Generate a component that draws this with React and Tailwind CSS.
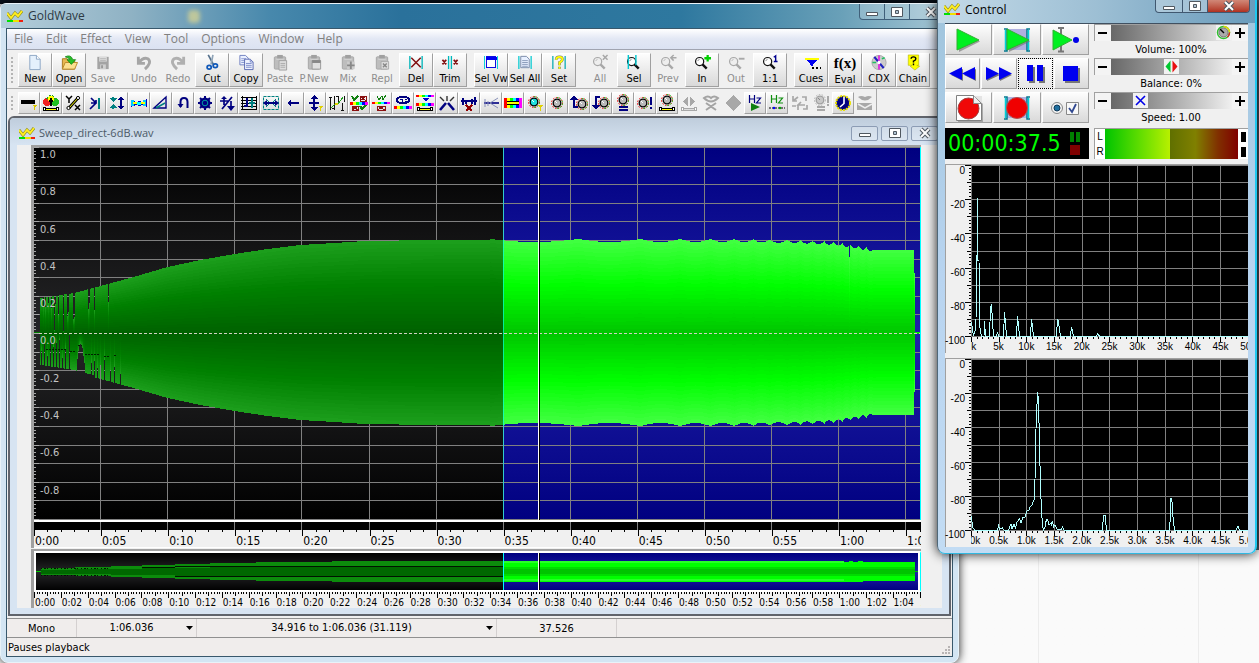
import { useState } from 'react'

const DURATION = 66.036
const WAVE_W = 887
const WAVE_H = 373
const SEL_START = 469
const CURSOR = 504
const pct = secs => `${(secs / DURATION) * 100}%`

const raised = 'border border-t-white border-l-white border-r-[#a0a0a0] border-b-[#a0a0a0] bg-linear-to-b from-[#fdfdfd] to-[#d9d9d9]'

/* ---------- small drawings ---------- */

const Pix = ({ w = 18, h = 18, children }) => (
  <svg width={w} height={h} viewBox={`0 0 ${w} ${h}`} fill="none" shapeRendering="crispEdges" aria-hidden="true">{children}</svg>
)

const Smooth = ({ w = 18, h = 18, children }) => (
  <svg width={w} height={h} viewBox={`0 0 ${w} ${h}`} fill="none" aria-hidden="true">{children}</svg>
)

const Logo = () => (
  <Smooth w={16} h={13}>
    <path d="M0 3 4 8 8 3 11 6 15 1" stroke="#8a8a20" strokeWidth="3" />
    <path d="M0 3 4 8 8 3 11 6 15 1" stroke="#ffee20" strokeWidth="2" />
    <path d="M0 10h6v2H0z" fill="#00e000" />
    <path d="M6 10h6v2H6z" fill="#f0e000" />
    <path d="M12 10h4v2h-4z" fill="#f02010" />
  </Smooth>
)

const Rainbow = ({ y = 9, h = 3 }) => (
  <>
    {['#f00', '#ff0', '#0f0', '#0ff', '#00f', '#f0f'].map((c, i) => (
      <rect key={c} x={i * 3} y={y} width="3" height={h} fill={c} />
    ))}
  </>
)

const YellowLine = ({ y = 15, c = '#000', f = '#ff0' }) => (
  <>
    <path d={`M3 ${y}h12`} stroke={c} strokeWidth="3" />
    <path d={`M3 ${y}h12`} stroke={f} strokeWidth="1" />
    <circle cx="2.5" cy={y} r="1.5" stroke={c} fill="#fff" />
    <circle cx="15.5" cy={y} r="1.5" stroke={c} fill="#fff" />
  </>
)

const Knob = ({ x = 9, y = 9, face = '#b8b8b8', grey }) => (
  <g shapeRendering="auto">
    <circle cx={x} cy={y} r="5.5" stroke={grey ? '#b0b0b0' : '#f00000'} strokeDasharray="1.5 1.5" />
    {!grey && <path d={`M${x} ${y - 5.5}a5.5 5.5 0 0 1 0 11`} stroke="#00c000" strokeDasharray="1.5 1.5" />}
    <circle cx={x} cy={y} r="3.8" fill={face} stroke={grey ? '#a0a0a0' : '#000'} strokeWidth="1.3" />
    <path d={`M${x - 2} ${y - 2}l2 2`} stroke={grey ? '#888' : '#fff'} />
  </g>
)

const Lens = ({ grey, children }) => (
  <Smooth w={24}>
    <circle cx="9.5" cy="8" r="4.3" fill={grey ? '#eee' : '#fff'} stroke={grey ? '#a8a8a8' : '#111'} strokeWidth="1.3" />
    <path d="M12.5 11 17 15.5" stroke={grey ? '#a8a8a8' : '#111'} strokeWidth="2.6" />
    <path d="M7.5 7.5q.4-1.6 2-2" stroke={grey ? '#bbb' : '#888'} />
    {children}
  </Smooth>
)

const Clip = ({ children }) => (
  <Smooth>
    <rect x="3" y="3" width="12" height="13" rx="1" fill="#bdbdbd" stroke="#a6a6a6" />
    <path d="M6 1h6v4H6z" fill="#a0a0a0" />
    <path d="M5 5.5h8" stroke="#d8d8d8" />
    {children}
  </Smooth>
)

/* ---------- main tool bar ---------- */

const mainIcons = {
  New: (
    <Smooth>
      <path d="M3.500 1.500h7l4 4v11h-11z" fill="#e4f0fc" stroke="#8ba6c4" />
      <path d="M10.500 1.500v4h4" fill="#fff" stroke="#8ba6c4" />
    </Smooth>
  ),
  Open: (
    <Smooth>
      <path d="M2 16V5h5l1 2h7v9z" fill="#e8b850" stroke="#a87820" />
      <path d="M2 16 5 9h13l-3 7z" fill="#fce090" stroke="#b88828" />
      <path d="M5 3q6-3 8 3h3l-4.500 5L7 6h3q-1-2-5-3z" fill="#28c028" stroke="#108010" strokeWidth=".8" />
    </Smooth>
  ),
  Save: (
    <Smooth>
      <path d="M3 3h12v13H3z" fill="#a4a4a4" />
      <path d="M5 3h8v5H5z" fill="#dcdcdc" />
      <path d="M6 5h6M6 7h6" stroke="#b4b4b4" />
      <path d="M6 11h6v5H6z" fill="#d0d0d0" />
      <path d="M7 12h2v3H7z" fill="#999" />
    </Smooth>
  ),
  Undo: (
    <Smooth><path d="M3 3v7h7M3.500 9.500Q8 3 13 5q5 4-3 11" stroke="#a6a6a6" strokeWidth="3" /></Smooth>
  ),
  Redo: (
    <Smooth><path d="M15 3v7H8M14.500 9.500Q10 3 5 5q-5 4 3 11" stroke="#b0b0b0" strokeWidth="3" /></Smooth>
  ),
  Cut: (
    <Smooth>
      <path d="M5 1 11 12" stroke="#56718c" strokeWidth="1.800" />
      <path d="M10 1 8 11" stroke="#8fa4b8" strokeWidth="1.800" />
      <ellipse cx="6" cy="14" rx="2.200" ry="2" stroke="#1058b8" strokeWidth="1.800" />
      <ellipse cx="12.500" cy="12.500" rx="2.300" ry="2" stroke="#1058b8" strokeWidth="1.800" />
    </Smooth>
  ),
  Copy: (
    <Smooth>
      <path d="M2.500 1.500h6l3 3v7h-9z" fill="#eaf0ff" stroke="#7080c0" />
      <path d="M4 5h5M4 7h5M4 9h5" stroke="#8898d0" />
      <path d="M7.500 5.500h6l3 3v8h-9z" fill="#eef2ff" stroke="#5868b0" />
      <path d="M13.500 5.500v3h3M9 10h6M9 12h6M9 14h6" stroke="#7888c8" />
    </Smooth>
  ),
  Paste: <Clip><path d="M8 7h8v10H8z" fill="#ddd" stroke="#a0a0a0" /><path d="M9.500 10h5M9.500 12h5M9.500 14h5" stroke="#aaa" /></Clip>,
  'P.New': <Clip><path d="M7 7h9v9H7z" fill="#e0e0e0" stroke="#999" /><path d="M7 8h9" stroke="#888" strokeWidth="3" /></Clip>,
  Mix: <Clip><path d="M8 8h8v8H8z" fill="#ccc" /><path d="M12 8v8M8 12h8" stroke="#888" strokeWidth="2" /></Clip>,
  Repl: <Clip><path d="M8 8h8v8H8z" fill="#ddd" stroke="#aaa" /><path d="m10 10 4 4m0-4-4 4" stroke="#888" strokeWidth="1.500" /></Clip>,
  Del: (
    <Smooth>
      <path d="M2.500 2v14M15.500 2v14" stroke="#00b4b8" strokeWidth="1.400" />
      <path d="m4 4 10 10M14 4 4 14" stroke="#801010" strokeWidth="1.600" />
    </Smooth>
  ),
  Trim: (
    <Smooth>
      <path d="M7.500 2v14M10.500 2v14" stroke="#00b8bc" strokeWidth="1.400" />
      <path d="m1 6 4 5m0-5-4 5m12-5 4 5m0-5-4 5" stroke="#801010" strokeWidth="1.800" />
    </Smooth>
  ),
  'Sel Vw': (
    <Pix>
      <path d="M2.500 2v14M15.500 2v14" stroke="#00d0d8" />
      <path d="M4 3h10v11H4z" fill="#fff" stroke="#0000e0" strokeWidth="1" />
      <path d="M4 3h11v3H4z" fill="#0000f0" />
    </Pix>
  ),
  'Sel All': (
    <Smooth>
      <path d="M2.500 2v14M15.500 2v14" stroke="#00c8d0" strokeWidth="1.300" />
      <path d="M4.500 2.500h6l3 3v9h-9z" fill="#e8f0ff" stroke="#7888a8" />
      <path d="M6 7h6M6 9h6M6 11h6M6 13h6" stroke="#8898b8" />
    </Smooth>
  ),
  Set: (
    <Smooth>
      <path d="M2.500 2v14M15.500 2v14" stroke="#00a8b0" strokeWidth="1.300" />
      <path d="M6 6q0-3 3.500-3t3 3.200Q12 8 9.500 9v3m0 1.500v2" stroke="#777" strokeWidth="3" />
      <path d="M6 6q0-3 3.500-3t3 3.200Q12 8 9.500 9v3m0 1.500v2" stroke="#ff0" strokeWidth="2" />
    </Smooth>
  ),
  All: <Lens grey><path d="m15 1 5 5m0-5-5 5" stroke="#a8a8a8" strokeWidth="1.600" /></Lens>,
  Sel: <Lens><path d="M6 1v15M14 1v11" stroke="#00c8d0" strokeWidth="1.500" /></Lens>,
  Prev: <Lens grey><path d="M21 4h-6m3-3-3 3 3 3" stroke="#a8a8a8" strokeWidth="1.600" /></Lens>,
  In: <Lens><path d="M18 1v7M14.500 4.500h7" stroke="#00d000" strokeWidth="2.400" /></Lens>,
  Out: <Lens grey><path d="M15 5h6" stroke="#a8a8a8" strokeWidth="2" /></Lens>,
  '1:1': <Lens><path d="M16 3.500 18 2v6m-2 0h4" stroke="#000090" strokeWidth="1.500" /></Lens>,
  Cues: (
    <Pix w={20}>
      <path d="M4 5h14l-7 8z" fill="#0000f0" />
      <path d="M4 5h14" stroke="#ff0" strokeWidth="2" />
      <path d="M11 14h2v2h-2zm4 0h2v2h-2zm4 0h2v2h-2z" fill="#000" />
    </Pix>
  ),
  Eval: <span className="h-[18px] font-['Liberation_Serif',serif] text-[15px] leading-[18px] font-bold">f(x)</span>,
  CDX: (
    <Smooth>
      <circle cx="9" cy="9" r="7.500" fill="#ccc" stroke="#a8a8a8" />
      <path d="m9 9-5-6M9 9l5 6" stroke="#2020c0" strokeWidth="2.200" />
      <path d="M9 1.500v15" stroke="#e020e0" strokeWidth="1.800" />
      <path d="M2 9h4m6-4 3-1" stroke="#20c060" strokeWidth="1.800" />
      <circle cx="9" cy="9" r="1.800" fill="#fff" />
    </Smooth>
  ),
  Chain: (
    <Smooth>
      <path d="M4 1h11v11h-2l3 1-5 4-5-4 2-1H4z" fill="#ff0" stroke="#b0b000" strokeWidth=".6" />
      <path d="M7 5q0-2 2.500-2T12 5q0 1.500-2.500 2.500V9m0 1v2" stroke="#000" strokeWidth="1.500" />
    </Smooth>
  ),
}

const mainGroups = [
  ['New', 'Open', 'Save'],
  ['Undo', 'Redo', 'Cut', 'Copy', 'Paste', 'P.New', 'Mix', 'Repl', 'Del', 'Trim'],
  ['Sel Vw', 'Sel All', 'Set'],
  ['All', 'Sel', 'Prev', 'In', 'Out', '1:1'],
  ['Cues', 'Eval', 'CDX', 'Chain'],
]
const disabledTools = ['Save', 'Undo', 'Redo', 'Paste', 'P.New', 'Mix', 'Repl', 'All', 'Prev', 'Out']

const Grip = () => <div className="mx-1 my-1 w-[3px] border-l-2 border-dotted border-[#b4b4b4]" />

const MainToolbar = () => (
  <div className="flex gap-[7px] border-b border-[#b0b0b0] bg-[#f0f0f0] pt-[3px] pb-[1px]">
    {mainGroups.map((group, i) => (
      <div key={i} className="flex">
        {i === 0 && <Grip />}
        {group.map(name => {
          const off = disabledTools.includes(name)
          return (
            <button key={name} type="button" disabled={off}
              className={`flex h-[34px] w-[34px] flex-col items-center whitespace-nowrap text-[11px] leading-[15px] ${off ? 'border border-transparent text-[#8e8e8e]' : raised + ' text-black'}`}>
              {mainIcons[name]}
              {name}
            </button>
          )
        })}
      </div>
    ))}
  </div>
)

/* ---------- effect tool bar ---------- */

const N = '#000080'
const T = '#008080'

const effects = [
  ['Control', <Pix><path d="M1 6h14v4H1z" fill="#000" /><path d="M12 11h5l-2 2v3h-1v-3z" fill="#d8c800" /></Pix>],
  ['Censor', <Pix><circle cx="5" cy="8" r="4" fill="#f02020" /><circle cx="13" cy="8" r="4" fill="#20c020" /><path d="M5 5q4-6 8 0" stroke="#20a020" strokeWidth="2" strokeDasharray="2 1" /><circle cx="9" cy="5" r="3" fill="#ff0" /><path d="M9 4v8M7 7h4" stroke="#000" strokeWidth="2" /><YellowLine /></Pix>],
  ['Channel mixer', <Smooth><path d="m2 2 3 3 3-3M5 5v4m6 2 5 5m0-5-5 5" stroke="#000" strokeWidth="1.500" /><path d="M5 14 14 4" stroke="#000" strokeWidth="3" /><path d="M5 14 14 4" stroke="#ff0" /><circle cx="4.500" cy="14" r="1.600" fill="#fff" stroke="#000" /><circle cx="14" cy="4" r="1.600" fill="#fff" stroke="#000" /></Smooth>],
  ['Compressor', <Smooth><path d="M5 4l5 5-6 6m1-6h5m0-3v3H7" stroke={N} strokeWidth="1.700" /><path d="M13 4v11" stroke={T} strokeWidth="2" /></Smooth>],
  ['Dynamics', <Pix><path d="M5 3v4M5 11v4" stroke={T} strokeWidth="2" /><path d="M1 4h8L5 8zM1 14h8l-4-4z" fill={T} /><path d="M13 5v8" stroke={N} strokeWidth="2" /><path d="M13 2 9.500 6h7zM13 16l-3.500-4h7z" fill={N} /></Pix>],
  ['Doppler', <Pix><path d="m1 6 5 2 3-1 3 1 5-3v8l-5-2-3 1-3-1-5 2z" fill="#0000c0" /><path d="M1 6h3v6H1zm12 0h3v6h-3z" fill="#0cf" /><path d="M3 9h12" stroke="#ff0" strokeWidth="2" /><path d="M7 9h4" stroke="#0ff" strokeWidth="3" /></Pix>],
  ['Echo', <Smooth><path d="M2 14 14 3v11z" stroke={N} strokeWidth="1.400" /><path d="m4 14 9-5" stroke={T} strokeWidth="1.500" /></Smooth>],
  ['Reverse phase', <Smooth><path d="M6.500 13V8q0-4 3.500-4t3.500 4v6" stroke={N} strokeWidth="2" /><path d="M3.500 10h6l-3 4z" fill={N} /></Smooth>],
  ['Flanger', <Smooth><circle cx="9" cy="9" r="5.500" fill={N} /><path d="M9 2v14M2 9h14M4 4l10 10M14 4 4 14" stroke={N} strokeWidth="2" /><circle cx="9" cy="9" r="2.800" fill={N} stroke="#00a0a0" /></Smooth>],
  ['Invert', <Smooth><path d="M2 7h8M6 4v7M13 7v5M4 15 14 3" stroke={N} strokeWidth="1.700" /><path d="m6 2 3 3H3zM9 12h8l-4 5z" fill={N} /></Smooth>],
  ['Mechanize', <Pix><path d="M1 3h16M1 6h16M1 9h16M1 12h16M1 15h16M2 2v14M16 2v14" stroke="#000" /><path d="M7 4v7M4 12h4" stroke={N} strokeWidth="2" /><path d="M12 4v10M9 9h6" stroke={T} strokeWidth="2" /></Pix>],
  ['Offset', <Smooth><path d="M1.500 2.500h15v13h-15z" stroke={T} strokeDasharray="3 1" /><path d="m4 5 3 3m7-3-3 3m-7 5 3-3m7 3-3-3" stroke={T} /><path d="M3 9h12" stroke={N} strokeWidth="2" /><path d="m1 9 4-3v6zm16 0-4-3v6z" fill={N} /></Smooth>],
  ['Reverse', <Pix><path d="M5 9h10" stroke={N} strokeWidth="2" /><path d="m3 9 4-4v8z" fill={N} /></Pix>],
  ['Pitch', <Pix><path d="M8 3v12M3 9h10" stroke={N} strokeWidth="2" /><path d="M8 1 4 5h8zm0 16-4-4h8z" fill={N} /><path d="M12 12h5l-2 2v3h-1v-3z" fill="#e0d000" /></Pix>],
  ['Reverb', <Pix><path d="M2.500 3v13M6.500 2v14M10.500 2v8M14.500 9v7M16.500 2v6M1 3h3M4 14h3m1-12h3m2 14h3" stroke="#111" /><path d="m3 14 4-4h3l5-7" stroke="#20a020" /><path d="M7 9h3v2H7z" fill="#e0d000" /></Pix>],
  ['Parametric EQ', <Pix><path d="M10 2h6v5h-6zM2 12h6v4H2z" stroke="#8a1010" /><path d="m10 2 6 5m0-5-6 5m-8 5 6 4m0-4-6 4" stroke="#8a1010" /><path d="m2 2 2 4 4-4m2 10 2 3 4-4" stroke="#108010" strokeWidth="2" /><Rainbow y={8} h={3} /></Pix>],
  ['Bandpass', <Pix><path d="M5 12h8v4H5zm0 0 8 4m0-4-8 4" stroke="#8a1010" /><path d="m5 2 2 4 3-4 1 4 3-5" stroke="#108010" /><Rainbow y={8} h={2} /></Pix>],
  ['Spectrum filter', <Pix><ellipse cx="9" cy="6" rx="6" ry="3.500" stroke={N} strokeWidth="2" /><path d="M6 5h2v3m3-3h2m-2 2h2" stroke={N} /><Rainbow y={12} /></Pix>],
  ['Equalizer', <Pix><Rainbow y={1} h={2} /><path d="M6 4h7l-3 4z" fill="#0000d0" /><Rainbow y={9} h={3} /><YellowLine y={15} /></Pix>],
  ['Pop/click', <Smooth><path d="M9 7v-5M6 7 2 3M12 7l4-4" stroke="#333" strokeWidth="1.400" /><path d="m8 9-6 7m8-7 6 7" stroke={N} strokeWidth="2.600" /></Smooth>],
  ['Silence reduction', <Pix><path d="M1 7h16M3 4v7M6 6v4M15 3v8M12 5v5" stroke={N} strokeWidth="2" /><path d="m6 11 6 6m0-6-6 6" stroke="#900000" strokeWidth="2" /></Pix>],
  ['Noise reduction', <Smooth><path d="M2 9h15" stroke={N} strokeWidth="1.600" /><path d="m8 9 8-5M8 9l8 5M3 5v8m3-6v5" stroke="#8890b8" /></Smooth>],
  ['Smoother', <Pix><Rainbow y={4} h={10} /><path d="M3 9h12" stroke="#000" strokeWidth="4" /><path d="M3 9h12" stroke="#ff0" strokeWidth="2" /></Pix>],
  ['Stereo center', <Pix><Knob x={8} y={8} face="#20e0e0" /><path d="M11 11h6l-2 2v4h-1v-4z" fill="#e0d000" /></Pix>],
  ['Volume', <Pix><Knob /></Pix>],
  ['Fade in', <Pix><Knob x={12} y={10} /><path d="M4 4v9h4" stroke={N} strokeWidth="2" /><path d="M4 1 0 6h8z" fill={N} /></Pix>],
  ['Fade out', <Pix><Knob x={12} y={9} /><path d="M8 3H4v9" stroke={N} strokeWidth="2" /><path d="m4 16-4-5h8z" fill={N} /></Pix>],
  ['Match volume', <Pix><Knob x={9} y={6} /><path d="M5 13h9M5 16h9" stroke={N} strokeWidth="2" /></Pix>],
  ['Maximize volume', <Pix><Knob x={7} y={9} /><path d="M15 3v8m0 2v2" stroke={N} strokeWidth="2" /></Pix>],
  ['Shape volume', <Pix><Knob x={9} y={6} /><YellowLine y={15} /></Pix>],
  ['Pan', <Pix><path d="M8 3v9L3 7.500zM10 3v9l5-4.500z" fill="#a8a8a8" /><YellowLine y={15} c="#a8a8a8" f="#ddd" /></Pix>, true],
  ['Reduce vocals', <Smooth><path d="M2 4q4-3 7 0 3-3 7 0-7 7-14 0zM4 9l10 7M14 9 4 16" stroke="#a4a4a4" strokeWidth="2" /></Smooth>, true],
  ['Stereo 3D', <Pix><path d="m9 1 8 8-8 8-8-8z" fill="#a8a8a8" /></Pix>, true],
  ['Playback rate', <Smooth><path d="M3.500 1v8m5-8v8m-5-4h5m2-1h4l-4 5h4.500" stroke={N} strokeWidth="1.200" /><path d="m5 9 9 4-9 4z" fill="#108010" /></Smooth>],
  ['Resample', <Smooth><path d="M3.500 1v8m5-8v8m-5-4h5m2-1h4l-4 5h4.500" stroke="#109010" strokeWidth="1.200" /><path d="M1 14h16" stroke="#000" strokeDasharray="2 1" /><circle cx="6" cy="14" r="1.200" fill="#00f" /><circle cx="12" cy="14" r="1.200" fill="#0a0" /></Smooth>],
  ['Convert', <Smooth><path d="M3 2v5h4M3 7l5-4m4 0h4v4m-1 4H8v5m3-8-4 4m10-1v4h-4M2 12h4" stroke="#a8a8a8" strokeWidth="1.700" /></Smooth>, true],
  ['Batch volume', <Pix><Knob x={8} y={6} grey face="#c8c8c8" /><path d="M5 13h8M5 16h8M16 2v7m0 1v2" stroke="#a8a8a8" strokeWidth="2" /></Pix>, true],
  ['Timer', <Smooth><circle cx="9" cy="9" r="7" fill={N} stroke="#e8e000" strokeWidth="2" strokeDasharray="2 1" /><path d="M10 3v6.500L6 13" stroke="#fff" strokeWidth="1.600" /></Smooth>],
  ['Speech', <Smooth><path d="M2 3q3-2 7 0 4-2 7 0-7 7-14 0z" fill="#a8a8a8" /><path d="M1 9h15v7H1z" fill="#a8a8a8" /><path d="m2 10 7 4 7-4" stroke="#eee" strokeWidth="1.500" /></Smooth>, true],
]

const EffectToolbar = () => (
  <div className="flex w-fit border-r border-[#a8a8a8] pt-[3px] pb-[2px]">
    <Grip />
    {effects.map(([name, icon, off]) => (
      <button key={name} type="button" aria-label={name} disabled={off}
        className={`flex h-[22px] w-[22px] items-center justify-center ${off ? 'border border-transparent' : raised}`}>
        {icon}
      </button>
    ))}
  </div>
)

/* ---------- wave form ---------- */

const envelope = [[6, 35], [20, 37], [40, 40], [66, 47], [99, 56], [133, 66], [166, 73], [200, 79], [233, 84], [266, 88], [300, 90], [330, 92], [400, 93], [450, 93], [700, 93], [760, 92], [800, 90], [842, 83], [880, 83]]
const peaks = [456, 544, 606, 646, 676, 700, 719, 735, 753, 766, 778, 790, 799, 808, 816, 824, 832, 840]
const topGaps = { 9: 8, 11: 10, 14: 6, 17: 12, 20: 34, 21: 8, 24: 20, 29: 36, 33: 22, 34: 18, 39: 26, 40: 24, 54: 20, 55: 14, 60: 22, 74: 18 }
const lowGaps = { 7: 14, 10: 22, 13: 10, 16: 26, 19: 20, 22: 24, 25: 28, 28: 10, 31: 20, 35: 34, 43: 12, 44: 20, 45: 26, 46: 28, 47: 26, 48: 24, 49: 16, 50: 10, 57: 12, 60: 16, 63: 10, 66: 14, 70: 20, 76: 12, 80: 16, 86: 10 }

const halfHeight = x => {
  if (x < 6 || x >= 881) return 1
  if (x >= 880) return 60
  const i = Math.max(0, envelope.findIndex(p => p[0] > x) - 1)
  const [x0, y0] = envelope[i]
  const [x1, y1] = envelope[i + 1]
  let h = y0 + ((y1 - y0) * (x - x0)) / (x1 - x0)
  const p = peaks.findIndex(v => v > x)
  if (p > 0) h -= 3 * Math.sin((Math.PI * (x - peaks[p - 1])) / (peaks[p] - peaks[p - 1])) - 1
  return h
}

const wavePath = scale => {
  const top = []
  const low = []
  for (let x = 0; x < WAVE_W; x++) {
    const h = halfHeight(x)
    const up = Math.round((x === 815 ? h - 11 : h - (topGaps[x] || 0)) * scale)
    const down = Math.round((h - (x < 60 ? 3 : 1) - (lowGaps[x] || 0)) * scale)
    top.push(`L${x} ${186 - up}H${x + 1}`)
    low.unshift(`L${x + 1} ${186 + Math.max(down, 1)}H${x}`)
  }
  return `M0 186${top.join('')}${low.join('')}Z`
}

const mix = (a, b, t) => a.map((v, i) => Math.round(v + (b[i] - v) * t))
const shade = (stops, t) => {
  const rgb = t < 0.55 ? mix(stops[0], stops[1], t / 0.55) : mix(stops[1], stops[2], (t - 0.55) / 0.45)
  return `rgb(${rgb.join(',')})`
}
const dim = [[0, 96, 0], [0, 128, 0], [28, 158, 28]]
const lit = [[0, 196, 0], [0, 255, 0], [64, 255, 64]]
const layers = Array.from({ length: 24 }, (_, k) => 1 - k / 24).map(s => ({ s, d: wavePath(s) }))

const WaveView = () => (
  <svg className="block h-full w-full" viewBox={`0 0 ${WAVE_W} ${WAVE_H}`} preserveAspectRatio="none" shapeRendering="crispEdges" role="img" aria-label="Waveform">
    <defs>
      <linearGradient id="bgDark" x2="0" y2="1">
        <stop offset="0" stopColor="#000" /><stop offset=".5" stopColor="#262628" /><stop offset="1" stopColor="#000" />
      </linearGradient>
      <linearGradient id="bgBlue" x2="0" y2="1">
        <stop offset="0" stopColor="#000080" /><stop offset=".5" stopColor="#2020a8" /><stop offset="1" stopColor="#000080" />
      </linearGradient>
      <clipPath id="left"><rect width={SEL_START} height={WAVE_H} /></clipPath>
      <clipPath id="right"><rect x={SEL_START} width={WAVE_W - SEL_START} height={WAVE_H} /></clipPath>
    </defs>
    <rect width={SEL_START} height={WAVE_H} fill="url(#bgDark)" />
    <rect x={SEL_START} width={WAVE_W - SEL_START} height={WAVE_H} fill="url(#bgBlue)" />
    {Array.from({ length: 21 }, (_, i) => (
      <rect key={i} y={Math.round(i * 18.6)} width={WAVE_W} height="1" fill="#808080" />
    ))}
    {Array.from({ length: 13 }, (_, i) => (
      <rect key={i} x={Math.round((i + 1) * 67.1) - 1} width="1" height={WAVE_H} fill="#808080" />
    ))}
    <g clipPath="url(#left)">{layers.map(l => <path key={l.s} d={l.d} fill={shade(dim, l.s)} />)}</g>
    <g clipPath="url(#right)">{layers.map(l => <path key={l.s} d={l.d} fill={shade(lit, l.s)} />)}</g>
    <path d="M12 202.500h20M36 204.500h6M44 198.500h4M51 207.500h14M70 209.500h5M80 208.500h3" stroke="#002000" strokeDasharray="2 1" />
    <path d="M0 186.500H886" stroke="#d0d0c0" strokeDasharray="3 2" />
    {Array.from({ length: 101 }, (_, i) => (
      <rect key={i} y={Math.round(i * 3.72)} width={i % 5 ? 2 : 5} height="1" fill="#a8a8a8" />
    ))}
    <rect x={SEL_START} width="1" height={WAVE_H} fill="#00ffff" opacity=".6" />
    <rect x={CURSOR} width="1" height={WAVE_H} fill="#fff" />
    <rect x={CURSOR + 1} width="1" height={WAVE_H} fill="#000" />
    <rect x={WAVE_W - 1} width="1" height={WAVE_H} fill="#00ffff" />
  </svg>
)

const overSteps = [[0, 5, 0], [5, 39, 3], [39, 75, 4], [75, 106, 5], [106, 139, 6], [139, 174, 7], [174, 220, 8], [220, 296, 9], [296, 467, 10]]

const OverviewView = () => (
  <svg className="block h-full w-full" viewBox="0 0 882 37" preserveAspectRatio="none" shapeRendering="crispEdges" role="img" aria-label="Overview">
    <rect width="467" height="38" fill="url(#bgDark)" />
    <rect x="467" width="417" height="38" fill="url(#bgBlue)" />
    {overSteps.map(([a, b, h]) => (
      <g key={a}>
        <rect x={a} y={18 - h} width={b - a} height={h * 2 + 1} fill="#0c8c0c" />
        <rect x={a} y={18 - h / 2} width={b - a} height={h + 1} fill="#006800" />
      </g>
    ))}
    <path d="M5 15.500h70M5 22.500h70" stroke="#041004" strokeDasharray="1 2 2 1 1 3" />
    <path d="M106 14.500h33M139 23.500h35M139 13.500h328M174 23.500h293" stroke="#001400" />
    <path d="M467 8h341v1h5v-1h4v1h5v-1h5v1h52v19h-52v1H467z" fill="#00ff00" />
    <path d="M467 8h341v2H467zM467 26h341v2H467z" fill="#28ff28" />
    <path d="M467 14h412v9H467z" fill="#00dc00" />
    <path d="M467 16h412v5H467z" fill="#00c400" />
    <path d="M0 18.500h5M879 18.500h5" stroke="#00c800" />
    <rect x="467" width="1" height="38" fill="#00ffff" />
    <rect x="502" width="1" height="38" fill="#fff" />
    <rect x="503" width="1" height="38" fill="#000" />
  </svg>
)

const clock = s => `${Math.floor(s / 60)}:${String(s % 60).padStart(2, '0')}`

const Ruler = ({ step, sub, textClass }) => {
  const count = Math.floor(DURATION / step) + 1
  return (
    <div className="overflow-hidden bg-[#f0f0f0]">
      <svg className="block h-[6px] w-full" viewBox={`0 0 ${WAVE_W} 6`} preserveAspectRatio="none" shapeRendering="crispEdges" aria-hidden="true">
        {Array.from({ length: Math.floor(DURATION / sub) + 1 }, (_, i) => {
          const major = Math.abs((i * sub) / step - Math.round((i * sub) / step)) < 0.001
          const middle = sub < 1 && i % 5 === 0
          return <rect key={i} x={Math.round(i * sub * 13.42)} width="1" height={major ? 6 : middle ? 4 : 2} fill="#000" />
        })}
      </svg>
      <div className={`flex ${textClass}`}>
        {Array.from({ length: count }, (_, i) => (
          <span key={i} className="shrink-0 whitespace-nowrap" style={{ width: pct(step) }}>{clock(i * step)}</span>
        ))}
      </div>
    </div>
  )
}

const CaptionGlyph = ({ name }) => (
  <Smooth w={14} h={12}>
    {name === 'Minimize' && <path d="M1.500 6.500h11v3h-11z" fill="#fff" stroke="#505860" />}
    {name === 'Maximize' && <><path d="M1.500 1.500h11v9h-11z" fill="#fff" stroke="#505860" /><path d="M5.500 4.500h3v3h-3z" fill="#b0c4d4" stroke="#505860" /></>}
    {name === 'Close' && <><path d="m3 2 8 8m0-8-8 8" stroke="#505860" strokeWidth="4" /><path d="m3 2 8 8m0-8-8 8" stroke="#fff" strokeWidth="2" /></>}
  </Smooth>
)

const CaptionButtons = ({ child }) => (
  <div className={child ? 'flex gap-[3px]' : 'flex divide-x divide-[#40607a] rounded-b border border-t-0 border-[#40607a] bg-white/20'}>
    {['Minimize', 'Maximize', 'Close'].map(name => (
      <button key={name} type="button" aria-label={name}
        className={child ? 'flex h-[15px] w-[27px] items-center justify-center rounded-[2px] border border-[#8c9cb4] bg-white/20' : 'flex h-[15px] w-[25px] items-center justify-center last:w-[41px]'}>
        <CaptionGlyph name={name} />
      </button>
    ))}
  </div>
)

const levels = ['1.0', '0.8', '0.6', '0.4', '0.2', '0.0', '-0.2', '-0.4', '-0.6', '-0.8']

const SoundWindow = () => (
  <div className="mx-[1px] flex min-h-0 flex-1 flex-col rounded-t-md border-2 border-[#60646c] bg-[#d7e4f2] px-[7px] pb-[6px]">
    <div className="-mx-[7px] flex h-[27px] shrink-0 items-center gap-1 rounded-t bg-linear-to-b from-[#bfcddc] to-[#d7e4f2] pt-[3px] pr-[11px] pl-[9px] text-[#4c5a68]">
      <Logo />
      <h2 className="flex-1 font-['Open_Sans','Noto_Sans',sans-serif] text-[11px]">Sweep_direct-6dB.wav</h2>
      <CaptionButtons child />
    </div>
    <div className="flex min-h-0 flex-1 flex-col bg-[#f0f0f0] pr-[21px] pl-[14px]">
      <div className="flex min-h-0 flex-1 flex-col border-t-2 border-l-[3px] border-[#a0a0a0]">
        <div className="relative min-h-0 flex-1">
          <WaveView />
          <div className="pointer-events-none absolute inset-0 flex flex-col pl-[6px] text-[11px] leading-[16px] text-[#c4c4c4]">
            {levels.map(l => <span key={l} className="flex-1">{l}</span>)}
          </div>
        </div>
        <div className="h-[2px] bg-white" />
        <div className="h-[8px] bg-black">
          <svg className="block h-full w-full" viewBox="0 0 887 8" preserveAspectRatio="none" shapeRendering="crispEdges" aria-hidden="true">
            {Array.from({ length: 13 }, (_, i) => <rect key={i} x={Math.round((i + 1) * 67.1) - 1} width="1" height="8" fill="#808080" />)}
          </svg>
        </div>
        <div className="border-b border-white"><Ruler step={5} sub={1} textClass="text-[12px] leading-[11px] pl-[1px]" /></div>
      </div>
      <div className="mt-[1px] border-t-2 border-l-[3px] border-[#a0a0a0]">
        <div className="h-[41px] border-y-2 border-l-2 border-white border-r border-r-[#00ffff] bg-white pr-[2px]"><OverviewView /></div>
        <Ruler step={2} sub={0.2} textClass="text-[10px] leading-[10px] pl-[1px]" />
      </div>
    </div>
  </div>
)

const StatusDrop = ({ className, children }) => (
  <button type="button" className={`flex items-center border-r border-[#d4d0d0] ${className}`}>
    <span className="flex-1 text-center leading-[20px]">{children}</span>
    <svg width="7" height="4" className="mr-[3px]" aria-hidden="true"><path d="M0 0h7L3.500 4z" /></svg>
  </button>
)

const menus = ['File', 'Edit', 'Effect', 'View', 'Tool', 'Options', 'Window', 'Help']

const MainWindow = () => (
  <main className="mt-[3px] mr-[300px] flex min-h-0 flex-1 flex-col rounded-t-md rounded-b-lg border border-[#e8f2f8] bg-[#d3e5f3] px-[5px] pb-[5px] shadow-[0_0_10px_rgba(0,0,0,0.9)]">
    <div className="-mx-[5px] flex h-[24px] shrink-0 items-start rounded-t bg-[linear-gradient(90deg,#b4cedb_0px,#8fb2c4_130px,#4788ac_270px,#2a719b_400px,#2e789f_680px,#69a0b8_840px,#a8c8d6_950px)] pr-[6px] pl-[6px]">
      <div className="flex h-full flex-1 items-center gap-[5px]">
        <Logo />
        <h1 className="font-['Open_Sans','Noto_Sans',sans-serif] text-[12px] text-[#2c3a44]">GoldWave</h1>
        <span className="ml-[98px] h-[13px] w-[12px] rounded bg-[#e0d890] opacity-70 blur-[2px]" />
      </div>
      <CaptionButtons />
    </div>
    <div className="flex min-h-0 flex-1 flex-col border border-[#38586c] bg-[#f0f0f0]">
      <nav className="flex h-[21px] shrink-0 items-center gap-[13px] border-b border-[#a0a4b0] bg-linear-to-b from-white via-[#e2e7f4] to-[#dbe2f2] pl-[7px] font-['Open_Sans','Noto_Sans',sans-serif] text-[12px] text-[#808080]">
        {menus.map(m => <button key={m} type="button">{m}</button>)}
      </nav>
      <MainToolbar />
      <EffectToolbar />
      <SoundWindow />
      <div className="mt-[2px] flex h-[20px] shrink-0 border-t border-b border-[#909090] bg-[#f0edec] text-[11px]">
        <span className="w-[70px] border-r border-[#d4d0d0] text-center leading-[20px]">Mono</span>
        <StatusDrop className="w-[120px]">1:06.036</StatusDrop>
        <StatusDrop className="w-[300px]">34.916 to 1:06.036 (31.119)</StatusDrop>
        <span className="w-[120px] border-r border-[#d4d0d0] text-center leading-[20px]">37.526</span>
      </div>
      <div className="flex h-[18px] shrink-0 items-start justify-between bg-[#f0edec] pl-[1px] text-[11px] leading-[20px]">
        <span>Pauses playback</span>
        <span className="pt-[6px]"><Pix w={12} h={12}><path d="M8 2h2v2H8zM8 5h2v2H8zM5 5h2v2H5zM8 8h2v2H8zM5 8h2v2H5zM2 8h2v2H2z" fill="#b8b4b4" /></Pix></span>
      </div>
    </div>
  </main>
)

/* ---------- control window ---------- */

const Play = ({ x = 0 }) => (
  <>
    <path d={`M${x + 4} 5l21 10.500L${x + 4} 26z`} fill="#707070" opacity=".6" />
    <path d={`M${x + 2} 3l22 11L${x + 2} 24z`} fill="#00f020" stroke="#30b030" />
  </>
)
const Brackets = () => (
  <>
    <path d="M5 3h20v21H5z" fill="#b0b0e0" />
    <path d="M2 3h3v22H2m26-22h-3v22h3" stroke="#007890" strokeWidth="1.500" />
    <path d="M3.500 4v20M26.500 4v20" stroke="#00d0d8" strokeWidth="1.500" />
  </>
)

const transport = [
  [
    ['Play', <Smooth w={28} h={28}><Play /></Smooth>],
    ['Play selection', <Smooth w={30} h={28}><Brackets /><g transform="translate(3 0)"><Play /></g></Smooth>],
    ['Play from cursor', <Smooth w={30} h={28}><path d="M11 1v25M8 2h6M8 25.500h6" stroke="#777" strokeWidth="2" /><path d="m3 4 19 10L3 24z" fill="#00f020" stroke="#30b030" /><circle cx="26" cy="14" r="3" fill="#0000e8" /></Smooth>],
  ],
  [
    ['Rewind', <Smooth w={28} h={20}><path d="m14 5-12 6 12 6zM27 5l-12 6 12 6z" fill="#777" /><path d="M13 3 0 9.500 13 16zm13 0L13 9.500 26 16z" fill="#0000f0" /></Smooth>],
    ['Fast forward', <Smooth w={28} h={20}><path d="m2 5 13 6-13 6zm13 0 12 6-12 6z" fill="#777" /><path d="m1 3 13 6.500L1 16zm13 0 13 6.500L14 16z" fill="#0000f0" /></Smooth>],
    ['Pause', <Smooth w={20} h={20}><path d="M4 3h6v16H4zm10 0h6v16h-6z" fill="#777" /><path d="M2 1h6v16H2zm10 0h6v16h-6z" fill="#0000f0" /></Smooth>],
    ['Stop', <Smooth w={20} h={20}><path d="M4 4h15v15H4z" fill="#777" /><path d="M2 2h15v15H2z" fill="#0000f0" /></Smooth>],
  ],
  [
    ['Record', <Smooth w={28} h={28}><path d="M3 2h17l8 8v18H3z" fill="#707070" opacity=".5" /><path d="M1.500 1.500h17l8 8v17h-25z" fill="#fff" stroke="#808080" /><circle cx="13.500" cy="14.500" r="10.500" fill="#f00808" stroke="#a04040" /><path d="M18.500 1.500v8h8z" fill="#f0f0f0" stroke="#888" /><path d="M19 2h8v7z" fill="#e4e4e4" /></Smooth>],
    ['Record selection', <Smooth w={30} h={28}><Brackets /><circle cx="15" cy="14" r="10.500" fill="#f00000" stroke="#b05050" /></Smooth>],
    ['Device controls', <Smooth w={30} h={16}><circle cx="7" cy="8" r="5.500" fill="#f4f4f4" stroke="#888" /><circle cx="7" cy="8" r="3" fill="#2070a0" stroke="#103858" /><path d="M16.500 2.500h12v12h-12z" fill="#f8f8f8" stroke="#888" /><path d="m19 8 3 4 4-8" stroke="#304890" strokeWidth="1.800" /></Smooth>],
  ],
]

const thumbs = {
  Volume: <Smooth w={15} h={15}><circle cx="7.500" cy="7.500" r="6" stroke="#30c030" strokeWidth="1.500" /><path d="M7.500 1.500a6 6 0 0 1 6 6" stroke="#e8d800" strokeWidth="1.500" /><path d="M13.500 7.500a6 6 0 0 1-2 4.500" stroke="#e02020" strokeWidth="1.500" /><circle cx="7.500" cy="7.500" r="4.500" fill="#aaa" stroke="#777" /><path d="m4 4 4 4" stroke="#000" strokeWidth="1.500" /></Smooth>,
  Balance: <Smooth w={15} h={15}><path d="m6.500 1.500-5 6 5 6z" fill="#00c830" /><path d="m8.500 1.500 5 6-5 6z" fill="#e81010" /></Smooth>,
  Speed: <Smooth w={15} h={15}><path d="m3 3 9 9m0-9-9 9" stroke="#0000e8" strokeWidth="1.600" /></Smooth>,
}

const Slider = ({ label, unit, start, at }) => {
  const [value, setValue] = useState(start)
  const pos = at + ((value - start) / 200) * 100
  return (
    <div className="flex flex-col items-center">
      <div className="flex h-[17px] w-full border-t border-l border-[#a0a0a0] bg-white">
        <button type="button" aria-label={`${label} down`} className="w-[16px] bg-[#f4f4f4]"><Pix w={15} h={14}><path d="M3 7h9" stroke="#000" strokeWidth="2" /></Pix></button>
        <div className="relative flex-1 bg-linear-to-r from-[#686868] to-[#f0f0f0]">
          <input id={label} type="range" min="0" max="200" value={value} onChange={e => setValue(+e.target.value)}
            className="block h-full w-full cursor-pointer appearance-none opacity-0" />
          <span className="pointer-events-none absolute top-0 h-[15px] w-[15px] bg-[#f2f2f2]" style={{ left: `${pos}%` }}>{thumbs[label]}</span>
        </div>
        <button type="button" aria-label={`${label} up`} className="w-[16px] bg-[#f4f4f4]"><Pix w={15} h={14}><path d="M3 7h10M8 2v10" stroke="#000" strokeWidth="2" /></Pix></button>
      </div>
      <label htmlFor={label} className="text-[11px] leading-[17px]">{label}: {unit}</label>
    </div>
  )
}

const SpectrumChart = ({ points, unitLabels, name }) => (
  <figure className="flex h-[189px] border-t border-l border-[#a0a0a0] bg-[#f0f0f0]" aria-label={name}>
    <div className="flex w-[19px] flex-col items-end pt-[1px] font-['Liberation_Sans',sans-serif] text-[10px] leading-[10px]">
      {[0, -20, -40, -60, -80, -100].map(v => <span key={v} className="h-[34px] shrink-0">{v}</span>)}
    </div>
    <svg width="6" height="176" className="shrink-0" shapeRendering="crispEdges" aria-hidden="true">
      {Array.from({ length: 51 }, (_, i) => {
        const len = i % 10 === 0 ? 6 : i % 5 === 0 ? 4 : 2
        return <rect key={i} x={6 - len} y={Math.round(i * 3.42)} width={len} height="1" />
      })}
    </svg>
    <div className="min-w-0 flex-1 overflow-hidden">
      <svg className="block h-[172px] w-full" viewBox="0 0 277 172" preserveAspectRatio="none" shapeRendering="crispEdges" aria-hidden="true">
        <rect width="277" height="172" fill="#000" />
        {Array.from({ length: 11 }, (_, i) => (
          <g key={i} fill="#808080">
            <rect x={Math.round(i * 27.65)} width="1" height="172" />
            <rect y={Math.round(i * 17.1)} width="277" height="1" />
          </g>
        ))}
        <polyline points={points} fill="none" stroke="#b0ffff" />
      </svg>
      <svg className="block h-[5px] w-full" viewBox="0 0 277 5" preserveAspectRatio="none" shapeRendering="crispEdges" aria-hidden="true">
        {Array.from({ length: 51 }, (_, i) => <rect key={i} x={Math.round(i * 5.53)} width="1" height={i % 5 ? 2 : 5} />)}
      </svg>
      <div className="-mx-[14px] flex font-['Liberation_Sans',sans-serif] text-[10px] leading-[10px]">
        {unitLabels.map((l, i) => <span key={i} className="flex-1 text-center">{l}</span>)}
      </div>
    </div>
  </figure>
)

const wideSpectrum = '0.5,157 1.5,165 2.5,170 4,166 5,155 5.5,91 6,91 6.5,33 7,95 8,95 8.5,160 9.5,166 10.5,171 13,171 13.5,156 14.5,171 18.5,171 19.5,143 20.5,139 21.5,156 22.5,171 25.5,171 26.5,167 27.5,171 32.5,171 33.5,147 35.5,171 45.5,171 46.5,151 48.5,171 59.5,171 60.5,154 62.5,171 85.5,171 86.5,154 87.5,157 89.5,171 99.5,171 100.5,162 102.5,171 125.5,171 126.5,169 128.5,171 277,171'
const zoomSpectrum = '0.5,157 1.5,168 3.5,171 26.5,171 27.5,167 28.5,170 31.5,169 33,171 37.5,171 40,165 41,170 43,165 44.5,169 46,163 48.5,160 50,164 52,158 54,158 56,152 58,151 59,148 61,146 62.5,142 63.5,140 64,120 65,70 66.5,33 67.5,41 68.5,85 69.5,127 70.5,152 71.5,166 72.5,171 74,168 75.5,160 76.5,160 78,166 80,164 80,167 81.5,162 82.5,168 84,166 86,170 90,171 91.5,168 93,171 131.5,171 132.5,156 134,156 135.5,171 198.5,171 199.5,155 200,139 201,143 202,158 203.5,171 265,171 267,167 268.5,171 277,171'

const ControlWindow = () => (
  <section className="absolute top-0 right-[2px] w-[320px] rounded-b-lg border border-t-0 border-[#506878] border-r-2 border-r-[#20c8f0] border-b-[#30b8e0] bg-linear-to-b from-[#9fc4dc] via-[#b8d4f0] to-[#c2dcf4] px-[7px] pb-[6px] shadow-[0_0_12px_rgba(0,0,0,0.9)]">
    <div className="-mx-[7px] flex h-[23px] items-start bg-linear-to-r from-[#c4dae8] via-[#9dbfd4] to-[#6a9cbc] pr-[5px] pl-[6px]">
      <div className="flex h-[19px] flex-1 items-center gap-[5px]">
        <Logo />
        <h2 className="font-['Open_Sans','Noto_Sans',sans-serif] text-[12px]">Control</h2>
      </div>
      <div className="flex h-[13px] overflow-hidden rounded-b border border-t-0 border-[#405870]">
        <button type="button" aria-label="Minimize control" className="flex w-[26px] items-center justify-center bg-white/30"><CaptionGlyph name="Minimize" /></button>
        <button type="button" aria-label="Maximize control" className="flex w-[26px] items-center justify-center border-x border-[#405870] bg-white/30"><CaptionGlyph name="Maximize" /></button>
        <button type="button" aria-label="Close control" className="flex w-[41px] items-center justify-center bg-linear-to-b from-[#d08878] to-[#b03020]"><CaptionGlyph name="Close" /></button>
      </div>
    </div>
    <div className="border-t border-[#405060] bg-[#f0f0f0]">
      <div className="flex gap-[5px]">
        <div className="flex w-[144px] flex-col gap-[3px]">
          {transport.map((row, i) => (
            <div key={i} className="flex h-[31px] gap-[1px]">
              {row.map(([name, icon]) => (
                <button key={name} type="button" aria-label={name}
                  className={`flex flex-1 items-center justify-center overflow-hidden ${name === 'Pause' ? 'border border-dotted border-black bg-linear-to-b from-[#fdfdfd] to-[#e6e6e6]' : raised}`}>
                  {icon}
                </button>
              ))}
            </div>
          ))}
        </div>
        <div className="flex flex-1 flex-col">
          <Slider label="Volume" unit="100%" start={100} at={87} />
          <Slider label="Balance" unit="0%" start={100} at={44} />
          <Slider label="Speed" unit="1.00" start={100} at={18} />
        </div>
      </div>
      <div className="mt-[2px] flex h-[31px] gap-[5px]">
        <div className="flex w-[144px] items-center justify-between bg-black pr-[8px] pl-[3px] font-['DejaVu_Sans_Condensed','DejaVu_Sans',sans-serif] text-[23px] leading-[31px] text-[#00ff00]">
          00:00:37.5
          <Pix w={11} h={24}><path d="M0 0h4v10H0zM6 0h4v10H6z" fill="#008000" /><path d="M0 13h10v10H0z" fill="#800000" /></Pix>
        </div>
        <div className="flex flex-1 border-t border-l border-[#a0a0a0] bg-white">
          <div className="flex w-[10px] flex-col items-center justify-around font-['Liberation_Sans',sans-serif] text-[10px] leading-none"><span>L</span><span>R</span></div>
          <div className="flex-1 bg-[linear-gradient(90deg,#00c400_0%,#5cdc00_25%,#b8f000_49%,#607000_49%,#808000_68%,#803000_85%,#800000_100%)]" />
          <div className="flex w-[10px] flex-col items-center justify-around"><span className="h-[10px] w-[5px] bg-black" /><span className="h-[10px] w-[5px] bg-black" /></div>
        </div>
      </div>
      <div className="mt-[5px] flex flex-col gap-[5px]">
        <SpectrumChart name="Spectrum to 50k" points={wideSpectrum} unitLabels={['0k', '5k', '10k', '15k', '20k', '25k', '30k', '35k', '40k', '45k', '50k']} />
        <SpectrumChart name="Spectrum to 5k" points={zoomSpectrum} unitLabels={['0.0k', '0.5k', '1.0k', '1.5k', '2.0k', '2.5k', '3.0k', '3.5k', '4.0k', '4.5k', '5.0k']} />
      </div>
    </div>
  </section>
)

export default function App() {
  return (
    <div className="relative flex h-screen flex-col overflow-hidden bg-linear-to-b from-[#0a121c] from-[4px] to-[#fafafa] to-[4px] font-['DejaVu_Sans_Condensed','Noto_Sans',sans-serif] text-black">
      <div className="absolute right-[60px] bottom-0 h-[110px] w-[161px] border-x border-[#ececec]" />
      <div className="absolute top-0 right-0 h-[550px] w-[10px] bg-[#485864]" />
      <MainWindow />
      <ControlWindow />
    </div>
  )
}
